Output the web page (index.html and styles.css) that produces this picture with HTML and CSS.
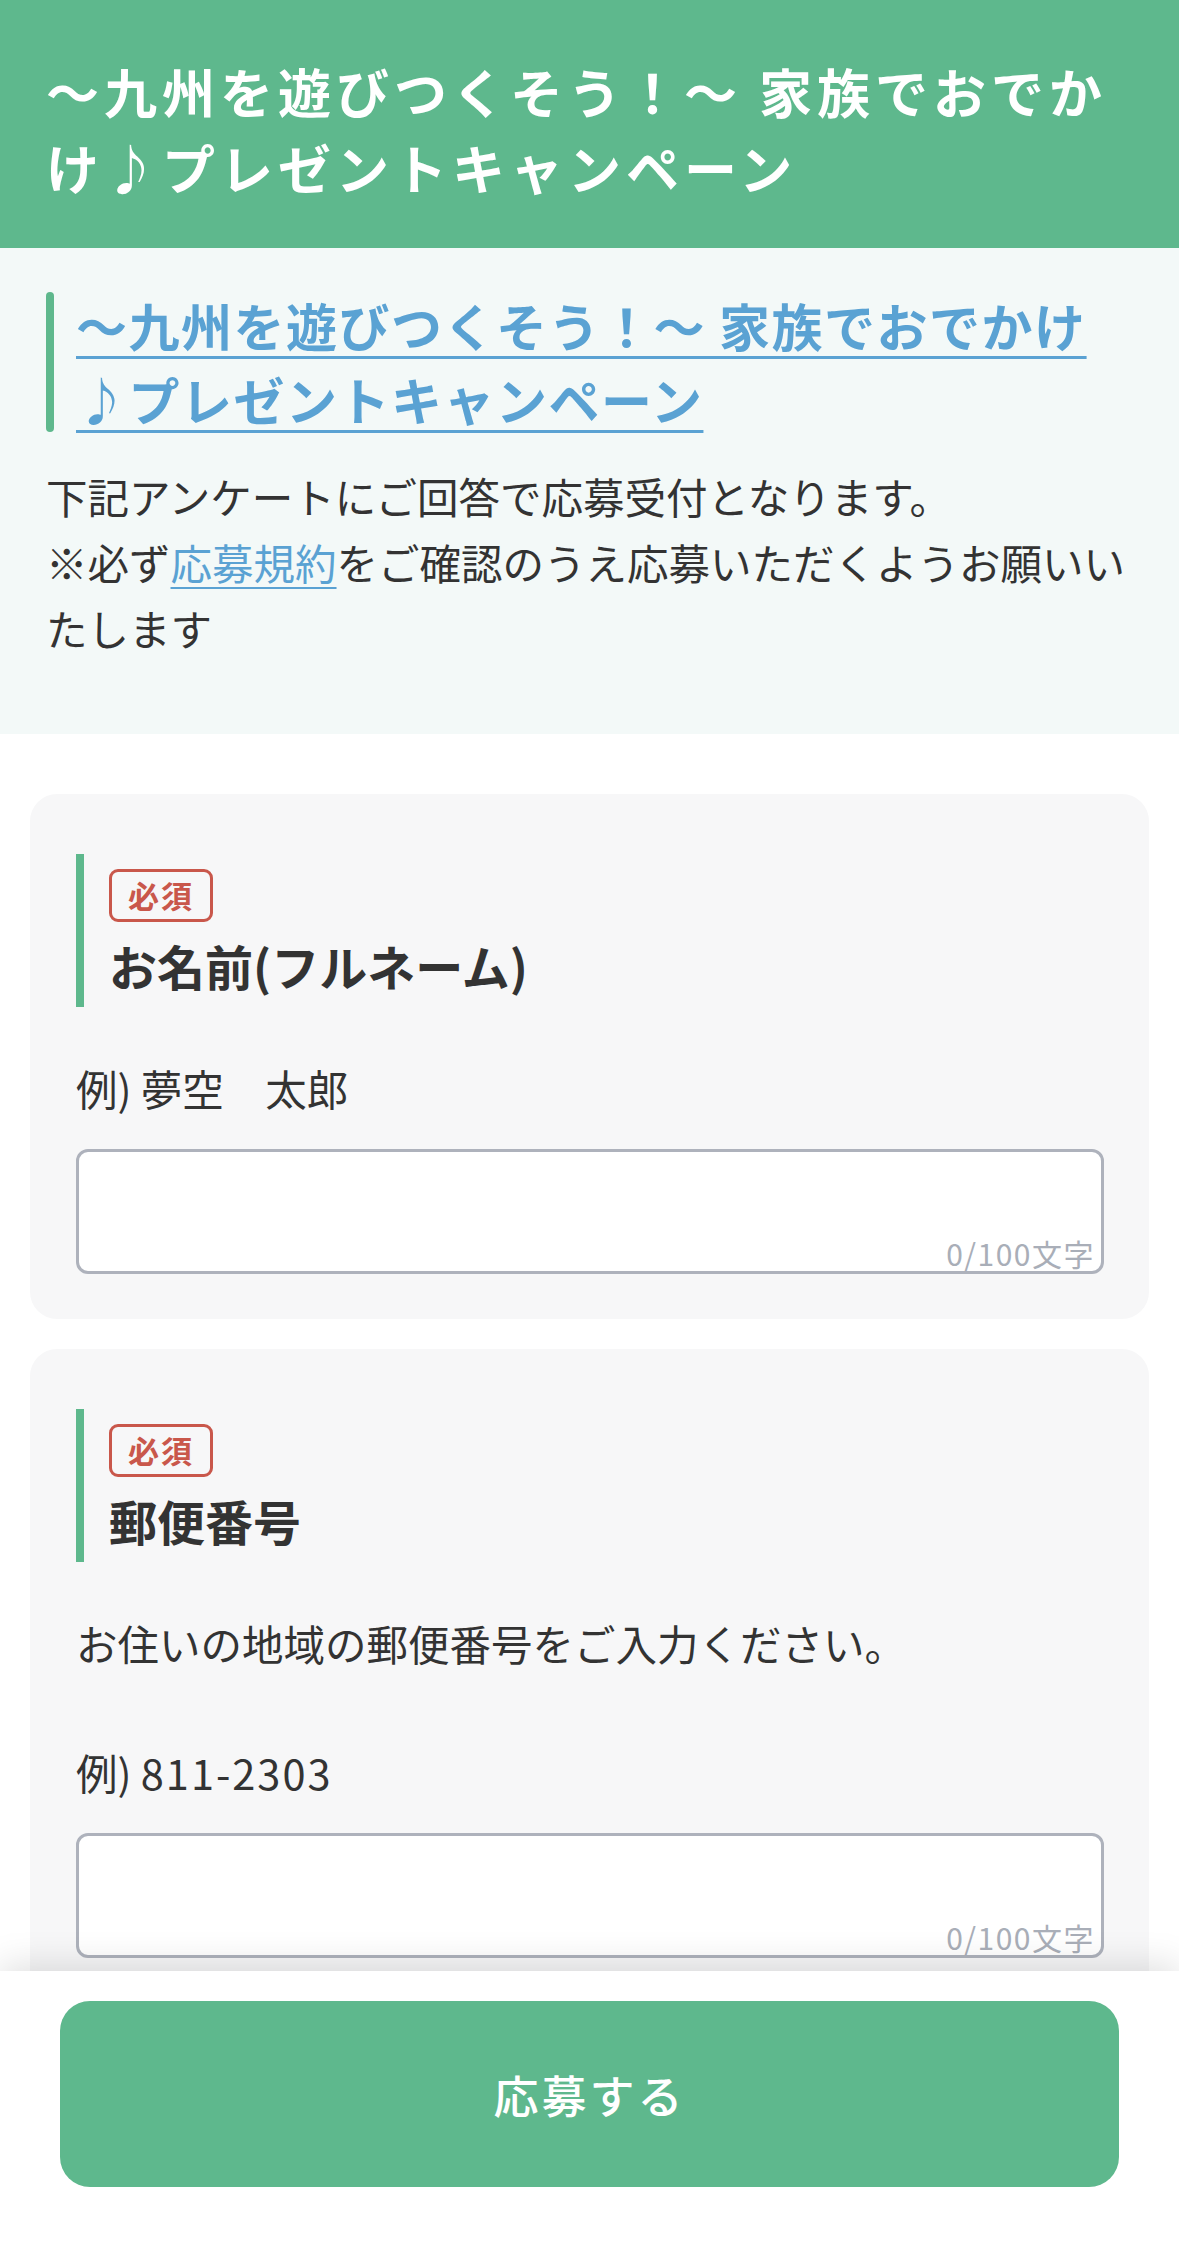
FILE: index.html
```html
<!DOCTYPE html>
<html lang="ja">
<head>
<meta charset="utf-8">
<title>〜九州を遊びつくそう！〜 家族でおでかけ♪プレゼントキャンペーン</title>
<link rel="stylesheet" href="styles.css">
</head>
<body>
<header class="page-header">
  <h1 class="page-title">〜九州を遊びつくそう！〜 家族でおでかけ♪プレゼントキャンペーン</h1>
</header>

<section class="intro">
  <div class="intro-heading">
    <span class="accent-bar"></span>
    <a class="intro-link" href="#">〜九州を遊びつくそう！〜 家族でおでかけ♪プレゼントキャンペーン</a>
  </div>
  <p class="intro-text">下記アンケートにご回答で応募受付となります。<br>※必ず<a class="terms-link" href="#">応募規約</a>をご確認のうえ応募いただくようお願いい<br>たします</p>
</section>

<main class="form">
  <section class="card">
    <div class="q-head">
      <span class="badge">必須</span>
      <h2 class="q-label">お名前(フルネーム)</h2>
    </div>
    <p class="q-example">例) 夢空　太郎</p>
    <div class="field-wrap">
      <textarea class="field"></textarea>
      <span class="counter">0/100文字</span>
    </div>
  </section>

  <section class="card">
    <div class="q-head">
      <span class="badge">必須</span>
      <h2 class="q-label">郵便番号</h2>
    </div>
    <p class="q-desc">お住いの地域の郵便番号をご入力ください。</p>
    <p class="q-example">例) <span class="num">811-2303</span></p>
    <div class="field-wrap">
      <textarea class="field"></textarea>
      <span class="counter">0/100文字</span>
    </div>
  </section>
</main>

<div class="submit-bar">
  <button class="submit-btn" type="button">応募する</button>
</div>
</body>
</html>
```

FILE: styles.css
```css
* {
  box-sizing: border-box;
}

html, body {
  margin: 0;
  padding: 0;
}

body {
  font-family: "Noto Sans CJK JP", "Noto Sans", sans-serif;
  color: #333333;
  background: #ffffff;
}

.page-header {
  background: #5eb88d;
  padding: 53px 46px 43px;
}

.page-title {
  margin: 0;
  color: #ffffff;
  font-size: 53px;
  font-weight: 700;
  line-height: 76px;
  letter-spacing: 5px;
}

.intro {
  background: #f3f9f8;
  padding: 40px 46px 73px;
}

.intro-heading {
  display: flex;
  align-items: stretch;
  gap: 22px;
  margin-right: 33px;
}

.accent-bar {
  flex: 0 0 8px;
  width: 8px;
  margin: 4px 0;
  border-radius: 4px;
  background: #5eb88d;
}

.intro-link {
  flex: 1;
  font-size: 51px;
  font-weight: 700;
  line-height: 74px;
  letter-spacing: 1.5px;
  color: #5aa2d3;
  text-decoration: underline;
  text-decoration-thickness: 3px;
  text-underline-offset: 9px;
}

.intro-text {
  margin: 27px 0 0;
  font-size: 41.5px;
  line-height: 66px;
  color: #333333;
}

.terms-link {
  color: #5aa2d3;
  text-decoration: underline;
  text-decoration-thickness: 2px;
  text-underline-offset: 7px;
}

.form {
  padding: 60px 30px 300px;
  display: flex;
  flex-direction: column;
  gap: 30px;
}

.card {
  background: #f7f7f8;
  border-radius: 27px;
  padding: 60px 45px 45px 46px;
}

.q-head {
  border-left: 8px solid #5eb88d;
  padding: 15px 0 12px 25px;
  margin-bottom: 48px;
}

.badge {
  display: inline-block;
  height: 53px;
  padding: 0 16px;
  border: 3px solid #c9574b;
  border-radius: 9px;
  color: #c9574b;
  font-size: 31px;
  font-weight: 700;
  line-height: 46px;
  letter-spacing: 2px;
  vertical-align: top;
}

.q-label {
  margin: 13px 0 0;
  font-size: 48px;
  font-weight: 700;
  line-height: 60px;
  color: #333333;
}

.q-desc {
  margin: 0 0 63px;
  font-size: 41.5px;
  line-height: 66px;
}

.q-example {
  margin: 0 0 28px;
  font-size: 41.5px;
  line-height: 66px;
}

.num {
  letter-spacing: 2px;
}

.field-wrap {
  position: relative;
}

.field {
  display: block;
  width: 100%;
  height: 125px;
  margin: 0;
  border: 3px solid #aeb2bc;
  border-radius: 12px;
  background: #ffffff;
  resize: none;
  font-family: inherit;
  font-size: 42px;
  padding: 12px 20px;
  outline: none;
}

.counter {
  position: absolute;
  right: 9px;
  bottom: 1px;
  font-size: 30px;
  line-height: 40px;
  letter-spacing: 1.5px;
  color: #a9aeb8;
}

.submit-bar {
  position: fixed;
  left: 0;
  right: 0;
  bottom: 0;
  height: 276px;
  background: #ffffff;
  padding: 30px 60px 0;
  box-shadow: 0 -6px 34px rgba(0, 0, 0, 0.13);
}

.submit-btn {
  display: block;
  width: 100%;
  height: 186px;
  border: none;
  border-radius: 30px;
  background: #5eb88d;
  color: #ffffff;
  font-family: "Noto Sans CJK JP", "Noto Sans", sans-serif;
  font-size: 45px;
  font-weight: 500;
  letter-spacing: 3px;
  cursor: pointer;
}
```
